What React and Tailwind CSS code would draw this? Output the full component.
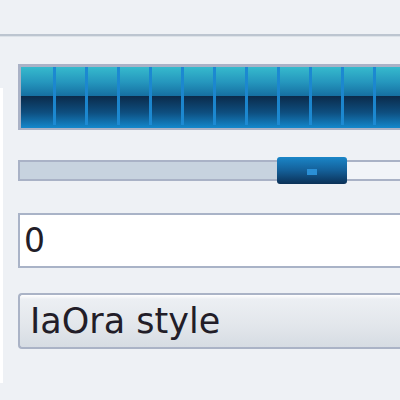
import React from 'react';

const segments = Array.from({ length: 12 });

function ProgressBar() {
  return (
    <div className="h-[66px] border-[3px] border-b-2 border-r-0 border-[#aab2c6] overflow-hidden">
      <div className="flex h-full bg-[linear-gradient(to_bottom,#36bacd_0%,#2596bd_25%,#1670a2_47%,#0b2b4b_48%,#0e4f80_75%,#1488cc_100%)]">
        <div className="w-[32px] shrink-0" />
        {segments.map((_, i) => (
          <div key={i} className="w-[32px] shrink-0 flex">
            <div className="w-[3px] h-[58px] bg-[linear-gradient(to_bottom,#1c8ad2,#1b84cc_60%,#1d8bd4)]" />
          </div>
        ))}
      </div>
    </div>
  );
}

function Slider() {
  return (
    <div className="flex items-center h-[27px]">
      <div className="w-[259px] h-[21px] shrink-0 bg-[#c7d3df] border-2 border-r-0 border-[#a9b2c6]" />
      <div className="w-[70px] h-[27px] shrink-0 rounded-[3px] bg-[linear-gradient(to_bottom,#1a86c8,#145f98_50%,#0b3157)] flex items-center justify-center">
        <div className="w-[10px] h-[6px] mt-[2px] bg-[#2a8fd6]" />
      </div>
      <div className="flex-1 h-[21px] bg-[#f1f4f8] border-y-2 border-[#a9b2c6]" />
    </div>
  );
}

export default function App() {
  return (
    <div className="w-[400px] h-[400px] overflow-hidden bg-[#eef1f5] font-['DejaVu_Sans',sans-serif]">
      <div className="h-[34px]" />
      <div className="h-[2px] bg-[#bcc5d0]" />
      <div className="h-[1px] bg-[#dce2e8]" />
      <div className="flex">
        <div className="w-[3px] shrink-0 mt-[51px] h-[295px] bg-white" />
        <div className="ml-[15px] mt-[27px] w-[400px] shrink-0">
          <ProgressBar />
          <div className="mt-[27px]">
            <Slider />
          </div>
          <div className="mt-[29px] h-[55px] bg-white border-2 border-r-0 border-[#a9b3c7] flex items-center pl-[4px] text-[33px] text-[#221d28] leading-none">
            0
          </div>
          <div className="mt-[25px] h-[56px] rounded-l-[4px] border-2 border-r-0 border-[#aab3c6] bg-[linear-gradient(to_bottom,#ffffff_0%,#eceff3_8%,#e2e6eb_60%,#d6dce3_100%)] flex items-center pl-[10px] text-[35px] text-[#221d28] leading-none">
            IaOra style
          </div>
        </div>
      </div>
    </div>
  );
}
